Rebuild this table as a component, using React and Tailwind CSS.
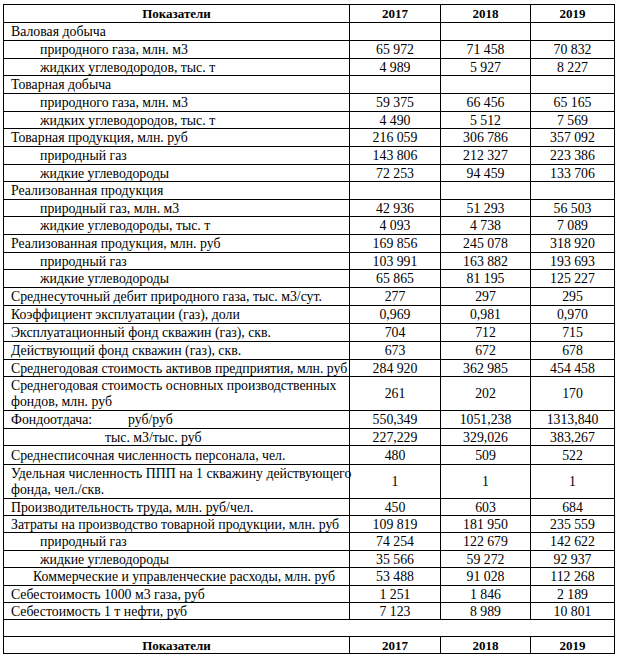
import React from 'react';

const rows = [
  ['Валовая добыча', '', '', '', 'main', 18],
  ['природного газа, млн. м3', '65 972', '71 458', '70 832', 'sub', 18],
  ['жидких углеводородов, тыс. т', '4 989', '5 927', '8 227', 'sub', 17],
  ['Товарная добыча', '', '', '', 'main', 18],
  ['природного газа, млн. м3', '59 375', '66 456', '65 165', 'sub', 18],
  ['жидких углеводородов, тыс. т', '4 490', '5 512', '7 569', 'sub', 17],
  ['Товарная продукция, млн. руб', '216 059', '306 786', '357 092', 'main', 18],
  ['природный газ', '143 806', '212 327', '223 386', 'sub', 18],
  ['жидкие углеводороды', '72 253', '94 459', '133 706', 'sub', 17],
  ['Реализованная продукция', '', '', '', 'main', 18],
  ['природный газ, млн. м3', '42 936', '51 293', '56 503', 'sub', 17],
  ['жидкие углеводороды, тыс. т', '4 093', '4 738', '7 089', 'sub', 18],
  ['Реализованная продукция, млн. руб', '169 856', '245 078', '318 920', 'main', 18],
  ['природный газ', '103 991', '163 882', '193 693', 'sub', 17],
  ['жидкие углеводороды', '65 865', '81 195', '125 227', 'sub', 18],
  ['Среднесуточный дебит природного газа, тыс. м3/сут.', '277', '297', '295', 'main', 18],
  ['Коэффициент эксплуатации (газ), доли', '0,969', '0,981', '0,970', 'main', 18],
  ['Эксплуатационный фонд скважин (газ), скв.', '704', '712', '715', 'main', 18],
  ['Действующий фонд скважин (газ), скв.', '673', '672', '678', 'main', 18],
  ['Среднегодовая стоимость активов предприятия, млн. руб', '284 920', '362 985', '454 458', 'main', 17],
  [['Среднегодовая стоимость основных производственных', 'фондов, млн. руб'], '261', '202', '170', 'double', 34],
  ['fond1', '550,349', '1051,238', '1313,840', 'fond', 18],
  ['fond2', '227,229', '329,026', '383,267', 'fond', 17],
  ['Среднесписочная численность персонала, чел.', '480', '509', '522', 'main', 19],
  [['Удельная численность ППП на 1 скважину действующего', 'фонда, чел./скв.'], '1', '1', '1', 'double', 34],
  ['Производительность труда, млн. руб/чел.', '450', '603', '684', 'main', 17],
  ['Затраты на производство товарной продукции, млн. руб', '109 819', '181 950', '235 559', 'main', 17],
  ['природный газ', '74 254', '122 679', '142 622', 'sub', 18],
  ['жидкие углеводороды', '35 566', '59 272', '92 937', 'sub', 17],
  ['Коммерческие и управленческие расходы, млн. руб', '53 488', '91 028', '112 268', 'comm', 18],
  ['Себестоимость 1000 м3 газа, руб', '1 251', '1 846', '2 189', 'main', 17],
  ['Себестоимость 1 т нефти, руб', '7 123', '8 989', '10 801', 'main', 17],
];

const Label = ({ text, kind }) => {
  if (text === 'fond1') {
    return (
      <div className="pl-[7px] whitespace-nowrap">
        <span className="inline-block w-[117px]">Фондоотдача:</span>
        <span>руб/руб</span>
      </div>
    );
  }
  if (text === 'fond2') {
    return <div className="pl-[101px] whitespace-nowrap">тыс. м3/тыс. руб</div>;
  }
  if (kind === 'double') {
    return (
      <div className="pl-[7px] leading-[16px] whitespace-nowrap">
        {text[0]}
        <br />
        {text[1]}
      </div>
    );
  }
  const pad = kind === 'sub' ? 'pl-[36px]' : kind === 'comm' ? 'pl-[29px]' : 'pl-[7px]';
  return <div className={`${pad} whitespace-nowrap`}>{text}</div>;
};

const HeaderRow = ({ h }) => (
  <tr className={`${h} font-bold text-[13px]`}>
    <td className="border border-black p-0 text-center">Показатели</td>
    <td className="border border-black p-0 text-center">2017</td>
    <td className="border border-black p-0 text-center">2018</td>
    <td className="border border-black p-0 text-center">2019</td>
  </tr>
);

export default function App() {
  return (
    <div className="bg-white w-[617px] h-[656px] overflow-hidden pl-[3px] pt-[4px] font-[family-name:Liberation_Serif,Times_New_Roman,serif] text-[13.8px] leading-[15px] text-black">
      <table className="border-collapse table-fixed w-[611px]">
        <colgroup>
          <col className="w-[346px]" />
          <col className="w-[91px]" />
          <col className="w-[90px]" />
          <col className="w-[84px]" />
        </colgroup>
        <tbody>
          <HeaderRow h="h-[18px]" />
          {rows.map(([label, a, b, c, kind, h], i) => (
            <tr key={i} style={{ height: h }}>
              <td className="border border-black p-0 align-middle">
                <Label text={label} kind={kind} />
              </td>
              <td className="border border-black p-0 text-center">{a}</td>
              <td className="border border-black p-0 text-center">{b}</td>
              <td className="border border-black p-0 text-center">{c}</td>
            </tr>
          ))}
          <tr className="h-[17px]">
            <td colSpan={4} className="border border-black p-0"></td>
          </tr>
          <HeaderRow h="h-[17px]" />
        </tbody>
      </table>
    </div>
  );
}
